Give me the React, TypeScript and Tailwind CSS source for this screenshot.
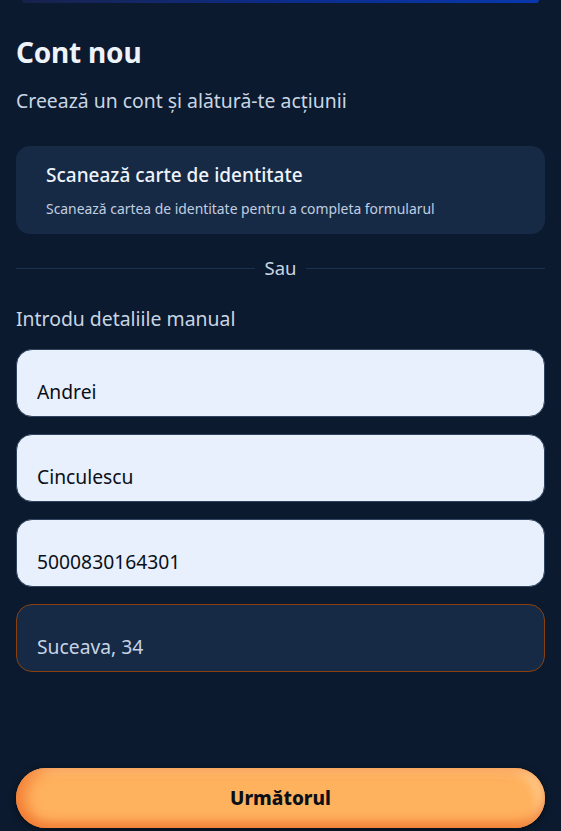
const FIELDS = [
  { value: "Andrei", light: true },
  { value: "Cinculescu", light: true },
  { value: "5000830164301", light: true },
  { value: "Suceava, 34", light: false },
];

export default function App() {
  return (
    <div
      className="flex min-h-[831px] flex-col bg-[#0b1a2e] px-4 pb-[3px]"
      style={{ fontFamily: '"Noto Sans", "Open Sans", sans-serif' }}
    >
      <div className="mx-[6px] h-[3px] rounded-b-full bg-gradient-to-r from-[#17214a] via-[#0b2c8a] to-[#0838ad]" />

      <h1 className="mt-[31px] text-[28px] font-bold leading-[36px] tracking-[-0.2px] text-[#eef3fa]">Cont nou</h1>
      <p className="mt-[17px] text-[19.4px] leading-[28px] text-[#c9d5e3]">Creează un cont și alătură-te acțiunii</p>

      <div className="mt-[31px] rounded-[14px] bg-[#172a45] px-[30px] pb-[15px] pt-[15px]">
        <div className="text-[19px] font-medium leading-[28px] text-[#eef3fa]">Scanează carte de identitate</div>
        <div className="mt-[10px] text-[13.9px] leading-[20px] text-[#c0cee0]">
          Scanează cartea de identitate pentru a completa formularul
        </div>
      </div>

      <div className="mt-[22px] flex items-center gap-[10px]">
        <div className="h-px flex-1 bg-[#1c314f]" />
        <span className="text-[18.5px] leading-[24px] text-[#c9d5e3]">Sau</span>
        <div className="h-px flex-1 bg-[#1c314f]" />
      </div>

      <div className="mt-[25px] text-[19.4px] leading-[28px] text-[#c9d5e3]">Introdu detaliile manual</div>

      <div className="mt-[16px] flex flex-col gap-[17px]">
        {FIELDS.map((f) => (
          <div
            key={f.value}
            className={
              f.light
                ? "rounded-[16px] border border-[#30445f] bg-[#e8f0fe] pb-[12px] pl-[20px] pt-[30px] text-[19.3px] leading-[24px] text-[#0b0f17]"
                : "rounded-[16px] border border-[#8a400c] bg-[#172a45] pb-[12px] pl-[20px] pt-[30px] text-[19.3px] leading-[24px] text-[#c6d4e4]"
            }
          >
            {f.value}
          </div>
        ))}
      </div>

      <div className="flex-1" />

      <button className="h-[60px] w-full rounded-full bg-[#ffb25e] text-[19px] font-extrabold text-[#0b0f17] shadow-[inset_10px_0_14px_rgba(240,120,50,0.75),inset_0_-6px_10px_rgba(240,120,50,0.7),inset_-8px_4px_10px_rgba(255,215,160,0.7),0_2px_6px_rgba(0,0,0,0.5)]">
        Următorul
      </button>
    </div>
  );
}
